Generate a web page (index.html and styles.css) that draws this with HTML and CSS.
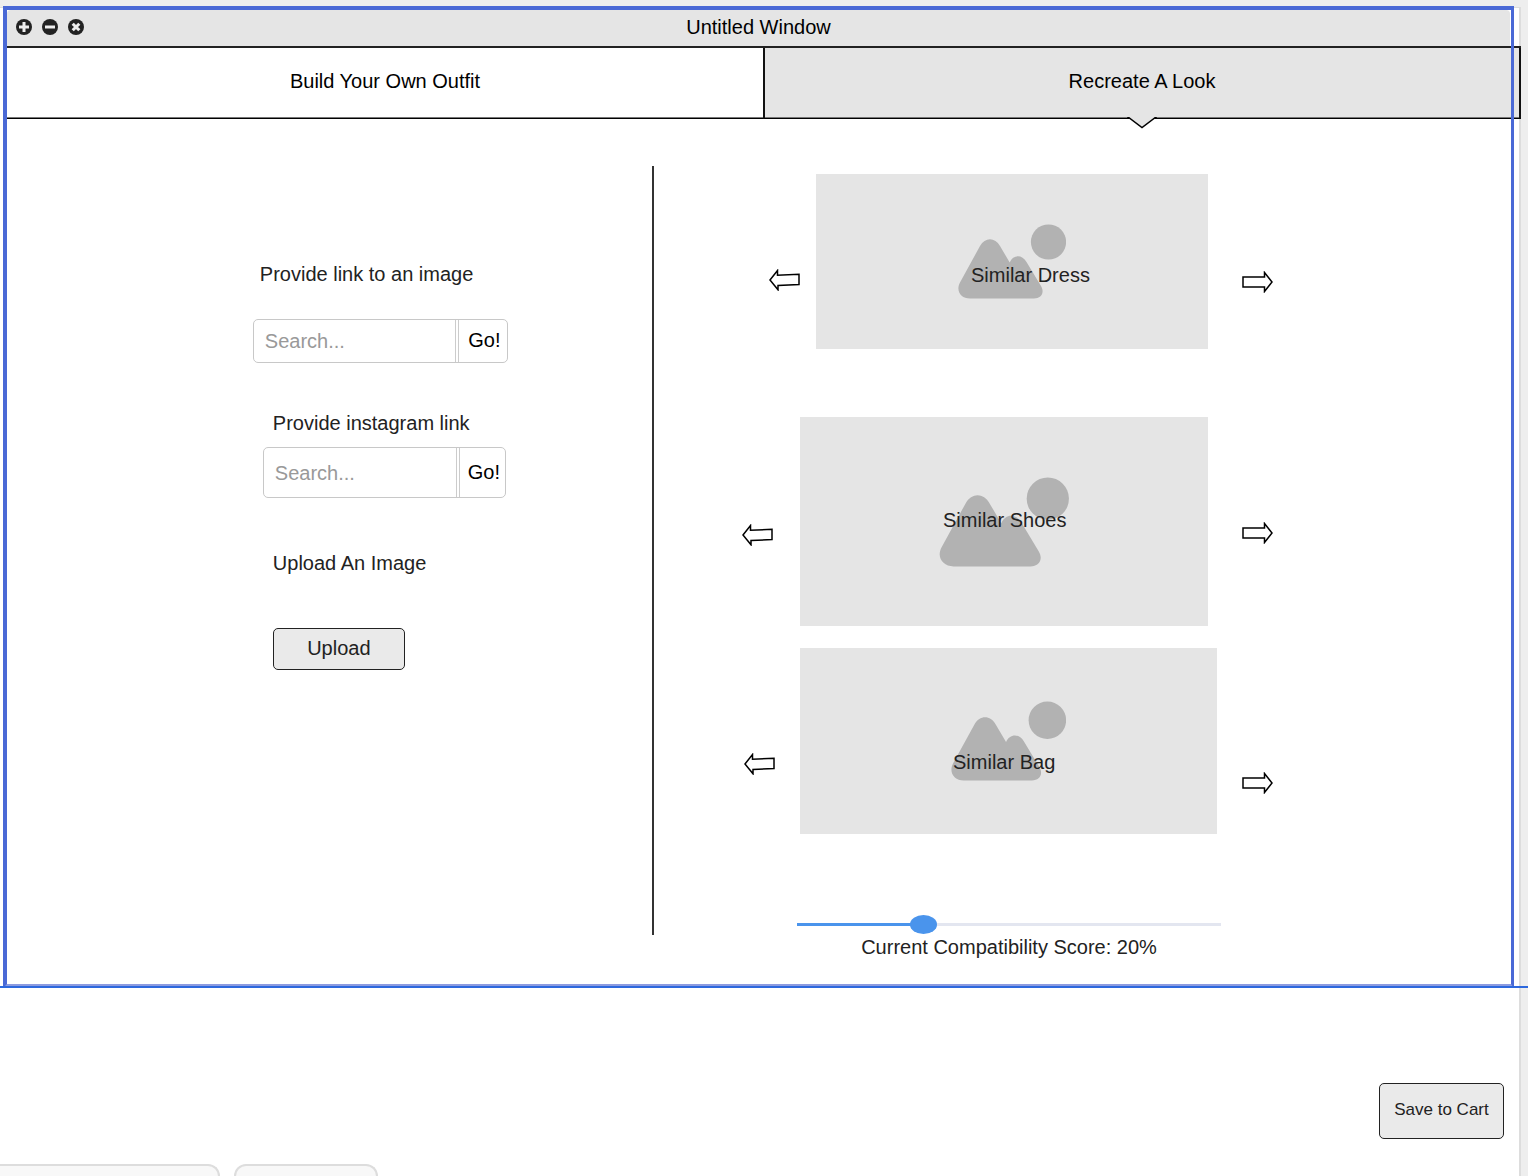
FILE: index.html
```html
<!DOCTYPE html>
<html lang="en">
<head>
<meta charset="utf-8">
<meta name="viewport" content="width=device-width, initial-scale=1">
<title>Untitled Window</title>
<link rel="stylesheet" href="styles.css">
</head>
<body>
<svg class="defs" aria-hidden="true">
  <symbol id="picture" viewBox="0 0 108 75">
    <path d="M12 74.5C3 74.5-2.500 67 2 58.500L22 22C27 13 37 13 42 22L51.700 38.500C55 30.500 64 30 68.500 38L83 62C87 69 83 74.500 76 74.500Z"/>
    <circle cx="90.500" cy="18" r="17.600"/>
  </symbol>
  <symbol id="arrow-left" viewBox="0 0 31 22">
    <path d="M1 11L8.500 1.500V6.300L30 5.300V15.500L9 16.500V20.800Z"/>
  </symbol>
  <symbol id="arrow-right" viewBox="0 0 31 22">
    <path d="M1 6H22.500V1.500L30 11L22.500 20.500V16H1Z"/>
  </symbol>
</svg>
<div class="sheet">
  <section class="window">
    <header class="titlebar">
      <div class="controls">
        <button type="button" aria-label="Zoom"><svg viewBox="0 0 16 16"><circle cx="8" cy="8" r="8"/><path d="M8 3V13M3 8H13"/></svg></button>
        <button type="button" aria-label="Minimize"><svg viewBox="0 0 16 16"><circle cx="8" cy="8" r="8"/><path d="M3 8H13"/></svg></button>
        <button type="button" aria-label="Close"><svg viewBox="0 0 16 16"><circle cx="8" cy="8" r="8"/><path d="M4.700 4.700L11.300 11.300M11.300 4.700L4.700 11.300"/></svg></button>
      </div>
      <h1>Untitled Window</h1>
    </header>
    <nav class="tabs">
      <a class="tab" href="#build">Build Your Own Outfit</a>
      <a class="tab tab-active" href="#recreate" aria-current="page">Recreate A Look
        <svg class="caret" viewBox="0 0 30 12" aria-hidden="true"><path d="M0 0H1L15 10.500L29 0H30"/></svg>
      </a>
    </nav>
    <main class="content">
      <div class="sources">
        <form class="source">
          <label for="image-link">Provide link to an image</label>
          <div class="search">
            <input id="image-link" type="text" placeholder="Search...">
            <button type="button">Go!</button>
          </div>
        </form>
        <form class="source source-instagram">
          <label for="instagram-link">Provide instagram link</label>
          <div class="search">
            <input id="instagram-link" type="text" placeholder="Search...">
            <button type="button">Go!</button>
          </div>
        </form>
        <form class="source source-upload">
          <h2>Upload An Image</h2>
          <button class="button" type="button">Upload</button>
        </form>
      </div>
      <div class="results">
        <div class="carousel dress">
          <button class="arrow prev" type="button" aria-label="Previous dress"><svg><use href="#arrow-left"/></svg></button>
          <figure><svg class="picture"><use href="#picture"/></svg><figcaption>Similar Dress</figcaption></figure>
          <button class="arrow next" type="button" aria-label="Next dress"><svg><use href="#arrow-right"/></svg></button>
        </div>
        <div class="carousel shoes">
          <button class="arrow prev" type="button" aria-label="Previous shoes"><svg><use href="#arrow-left"/></svg></button>
          <figure><svg class="picture"><use href="#picture"/></svg><figcaption>Similar Shoes</figcaption></figure>
          <button class="arrow next" type="button" aria-label="Next shoes"><svg><use href="#arrow-right"/></svg></button>
        </div>
        <div class="carousel bag">
          <button class="arrow prev" type="button" aria-label="Previous bag"><svg><use href="#arrow-left"/></svg></button>
          <figure><svg class="picture"><use href="#picture"/></svg><figcaption>Similar Bag</figcaption></figure>
          <button class="arrow next" type="button" aria-label="Next bag"><svg><use href="#arrow-right"/></svg></button>
        </div>
        <div class="score">
          <input id="score" type="range" min="0" max="100" step="any" value="28.5">
          <label for="score">Current Compatibility Score: 20%</label>
        </div>
      </div>
    </main>
  </section>
  <hr class="guide">
  <footer class="actions">
    <button class="button button-save" type="button">Save to Cart</button>
  </footer>
  <div class="panels" aria-hidden="true">
    <div class="panel panel-first"></div>
    <div class="panel"></div>
  </div>
</div>
</body>
</html>
```
FILE: styles.css
```css
* {
  box-sizing: border-box;
}

body {
  margin: 0;
  padding-top: 7px;
  background: #eee;
  color: #222;
  font: 20px/24px "Liberation Sans", Helvetica, Arial, sans-serif;
}

button,
input {
  margin: 0;
  padding: 0;
  border: 0;
  background: none;
  color: inherit;
  font: inherit;
}

h1,
h2,
figure {
  margin: 0;
  font-size: 20px;
  font-weight: normal;
}

.defs {
  position: absolute;
  width: 0;
  height: 0;
}

.sheet {
  margin-right: 7px;
  border-top: 1px solid #ddd;
  border-right: 2px solid #ddd;
  background: #fff;
}

/* Window: the selection frame is drawn over its content */
.window {
  position: relative;
  margin: -2px 5px 0 3px;
  padding: 4px;
  background: #fff;
}

.window::after {
  content: "";
  position: absolute;
  inset: 0;
  border: 4px solid #4a69d6;
  border-right-width: 3px;
  border-bottom-color: #8c9be0;
  pointer-events: none;
}

.titlebar {
  display: grid;
  grid-template-columns: 1fr auto 1fr;
  align-items: center;
  padding: 5px 9px 7px;
  border-radius: 4px 4px 0 0;
  background: #e5e5e5;
  color: #000;
}

.controls {
  display: flex;
  gap: 10px;
}

.controls svg {
  display: block;
  width: 16px;
  height: 16px;
  fill: #222;
}

.controls path {
  stroke: #eee;
  stroke-width: 3;
}

.tabs {
  display: grid;
  grid-template-columns: 756fr 758fr;
  margin-right: -11px;
  border-top: 2px solid #222;
}

.tab {
  position: relative;
  padding: 21px 16px 25px;
  border-bottom: 1px solid #000;
  box-shadow: inset 0 -1px #777;
  color: #000;
  text-align: center;
  text-decoration: none;
}

.tab-active {
  border-right: 2px solid #111;
  border-left: 2px solid #111;
  background: #e5e5e5;
}

.caret {
  position: absolute;
  top: 100%;
  left: 50%;
  width: 30px;
  height: 12px;
  margin: -1px 0 0 -15px;
  fill: #e5e5e5;
  stroke: #000;
  stroke-width: 1.5;
}

.content {
  display: grid;
  grid-template-columns: 647fr 856fr;
  padding: 47px 0 25px;
}

.sources {
  display: flex;
  flex-direction: column;
  gap: 48px;
  margin-bottom: 24px;
  padding: 96px 16px 0 38%;
  border-right: 2px solid #333;
}

.source {
  display: flex;
  flex-direction: column;
  align-items: flex-start;
  gap: 33px;
}

.source > label {
  padding-left: 7px;
}

.source-instagram {
  gap: 12px;
  padding-left: 10px;
}

.source-instagram > label {
  padding-left: 10px;
}

.source-upload {
  gap: 53px;
  padding: 5px 0 0 20px;
}

.search {
  display: flex;
  width: 255px;
  height: 44px;
  border: 1px solid #c8c8c8;
  border-radius: 5px;
}

.source-instagram .search {
  width: 243px;
  height: 51px;
}

.search input {
  flex: 1;
  min-width: 0;
  padding-left: 11px;
}

.search input::placeholder {
  color: #999;
  opacity: 1;
}

.search button {
  width: 52px;
  padding: 0 0 2px 3px;
  border-left: 4px double #ccc;
  color: #000;
}

.source-instagram .search button {
  width: 49px;
}

.button {
  width: 132px;
  padding: 7px 0 9px;
  border: 1px solid #222;
  border-radius: 5px;
  background: #eaeaea;
}

.results {
  display: grid;
  grid-template-columns: 88fr 531fr 237fr;
  padding-top: 8px;
}

.carousel,
.score {
  grid-column: 2;
}

.carousel {
  display: flex;
  align-items: flex-start;
}

.arrow svg {
  display: block;
  width: 31px;
  height: 22px;
  fill: #fff;
  stroke: #000;
  stroke-width: 1.5;
}

.carousel figure {
  position: relative;
  display: flex;
  flex: 1;
  align-items: center;
  justify-content: center;
  background: #e5e5e5;
}

.picture {
  fill: #b2b2b2;
}

.carousel figcaption {
  position: absolute;
  white-space: nowrap;
}

.dress {
  margin-bottom: 68px;
  padding-left: 27px;
}

.dress figure {
  height: 175px;
  margin: 0 34px 0 16px;
}

.dress .picture {
  width: 108px;
  height: 75px;
}

.dress figcaption {
  top: 89px;
  left: 155px;
}

.dress .prev {
  margin-top: 95px;
}

.dress .next {
  margin-top: 97px;
}

.shoes {
  margin-bottom: 22px;
}

.shoes figure {
  height: 209px;
  margin: 0 34px 0 27px;
}

.shoes .picture {
  width: 130px;
  height: 90px;
}

.shoes figcaption {
  top: 91px;
  left: 143px;
}

.shoes .prev {
  margin-top: 107px;
}

.shoes .next {
  margin-top: 105px;
}

.bag {
  margin-bottom: 80px;
  padding-left: 2px;
}

.bag figure {
  height: 186px;
  margin: 0 25px;
}

.bag .picture {
  width: 115px;
  height: 80px;
}

.bag figcaption {
  top: 102px;
  left: 153px;
}

.bag .prev {
  margin-top: 105px;
}

.bag .next {
  margin-top: 124px;
}

.score {
  display: flex;
  flex-direction: column;
  gap: 1px;
  margin: 0 52px 0 55px;
  text-align: center;
}

.score input {
  -webkit-appearance: none;
  appearance: none;
  width: 100%;
  height: 20px;
}

.score input::-webkit-slider-runnable-track {
  height: 3px;
  background: linear-gradient(to right, #4a94ec 30%, #e3e6f0 30%);
}

.score input::-webkit-slider-thumb {
  -webkit-appearance: none;
  width: 27px;
  height: 19px;
  margin-top: -8px;
  border-radius: 50%;
  background: #4a94ec;
}

.guide {
  position: relative;
  height: 2px;
  margin: -2px -9px 0 0;
  border: 0;
  background: #2d68dd;
}

.actions {
  display: flex;
  justify-content: flex-end;
  padding: 95px 15px 25px;
}

.button-save {
  width: 125px;
  padding: 14px 0 16px;
  font-size: 17px;
}

.panels {
  display: flex;
  gap: 14px;
}

.panel {
  width: 144px;
  height: 12px;
  border: 2px solid #ddd;
  border-bottom: 0;
  border-radius: 12px 12px 0 0;
  background: #f8f8f8;
}

.panel-first {
  width: 220px;
  border-left: 0;
  border-top-left-radius: 0;
}
```
